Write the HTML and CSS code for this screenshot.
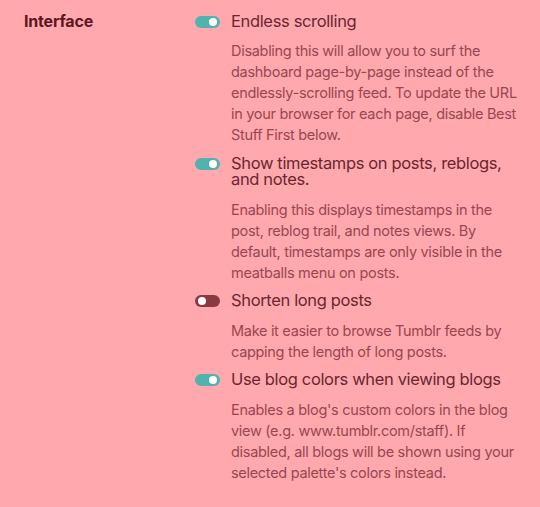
FILE: index.html
```html
<!DOCTYPE html>
<html lang="en">
<head>
    <meta charset="UTF-8">
    <title>Interface</title>
    <link rel="stylesheet" href="styles.css">
</head>
<body>
<div class='section'>
    <h2 class='sectionTitle'>Interface</h2>
    <ul class='settings'>
        <li class='setting'>
            <div class='settingHead'>
                <span class='toggle on'></span>
                <span class='settingName'>Endless scrolling</span>
            </div>
            <p class='settingDesc'>Disabling this will allow you to surf the dashboard page-by-page instead of the endlessly-scrolling feed. To update the URL in your browser for each page, disable Best Stuff First below.</p>
        </li>
        <li class='setting'>
            <div class='settingHead'>
                <span class='toggle on'></span>
                <span class='settingName'>Show timestamps on posts, reblogs, and notes.</span>
            </div>
            <p class='settingDesc'>Enabling this displays timestamps in the post, reblog trail, and notes views. By default, timestamps are only visible in the meatballs menu on posts.</p>
        </li>
        <li class='setting'>
            <div class='settingHead'>
                <span class='toggle'></span>
                <span class='settingName'>Shorten long posts</span>
            </div>
            <p class='settingDesc'>Make it easier to browse Tumblr feeds by capping the length of long posts.</p>
        </li>
        <li class='setting'>
            <div class='settingHead'>
                <span class='toggle on'></span>
                <span class='settingName'>Use blog colors when viewing blogs</span>
            </div>
            <p class='settingDesc'>Enables a blog's custom colors in the blog view (e.g. www.tumblr.com/staff). If disabled, all blogs will be shown using your selected palette's colors instead.</p>
        </li>
    </ul>
</div>
</body>
</html>
```

FILE: styles.css
```css
*{
    margin:0;
    padding:0;
    box-sizing:border-box;
}
ul,li{
    list-style:none;
}
body{
    background:#ffa9ae;
    font-family:Inter,"Noto Sans",sans-serif;
    -webkit-font-smoothing:antialiased;
}
.section{
    display:flex;
    padding:12px 0 0 24px;
}
.sectionTitle{
    width:171px;
    flex-shrink:0;
    font-size:16px;
    line-height:19px;
    font-weight:700;
    letter-spacing:-0.2px;
    color:#5c1821;
}
.settings{
    display:flex;
    flex-direction:column;
    gap:9.75px;
    width:322px;
    padding-top:0.75px;
}
.settingHead{
    display:flex;
    align-items:flex-start;
    gap:11px;
}
.toggle{
    position:relative;
    flex-shrink:0;
    width:25px;
    height:12px;
    margin-top:3px;
    border-radius:6px;
    background:#8a3941;
}
.toggle::after{
    content:"";
    position:absolute;
    top:2px;
    left:3px;
    width:8px;
    height:8px;
    border-radius:50%;
    background:#fff;
}
.toggle.on{
    background:#52b3ae;
}
.toggle.on::after{
    left:14px;
}
.settingName{
    font-size:16.5px;
    line-height:16.5px;
    letter-spacing:-0.35px;
    color:#6a2630;
}
.settingDesc{
    margin:10.75px 0 0 36px;
    font-size:14.5px;
    line-height:21px;
    letter-spacing:-0.3px;
    color:#9a4650;
}
```
